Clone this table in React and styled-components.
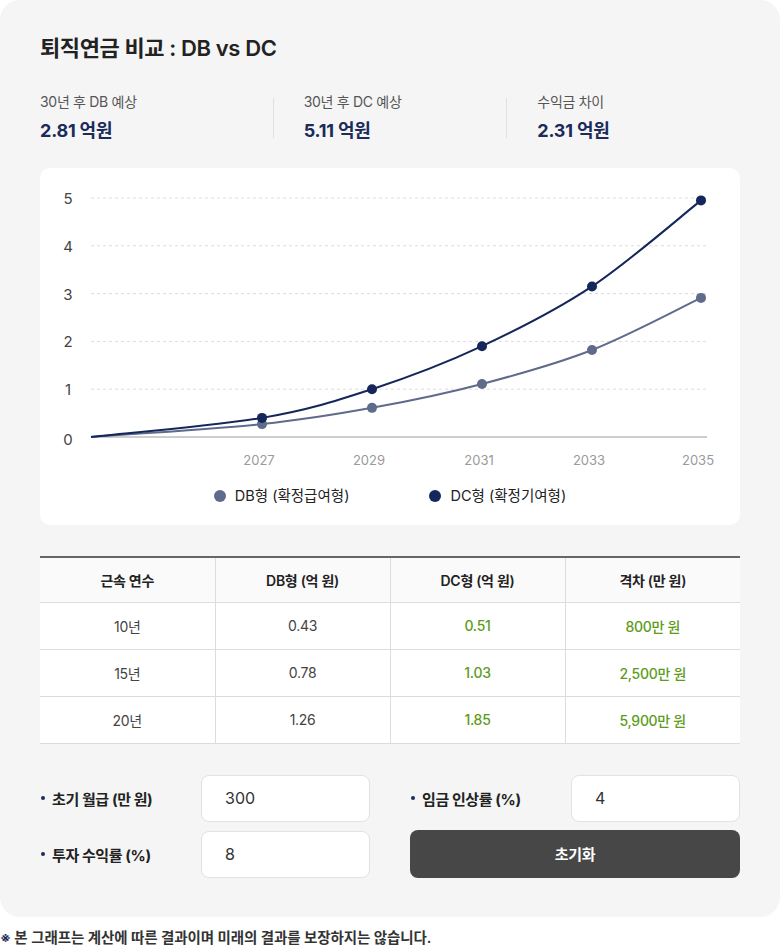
import React from "react";
import styled, { createGlobalStyle } from "styled-components";

const GlobalStyle = createGlobalStyle`
  html, body {
    margin: 0;
    padding: 0;
    background: #fff;
    overflow: hidden;
  }
  body {
    font-family: Inter, "Noto Sans CJK KR", sans-serif;
    color: #222;
  }
  * {
    box-sizing: border-box;
  }
`;

const stats = [
  { label: "30년 후 DB 예상", value: "2.81 억원" },
  { label: "30년 후 DC 예상", value: "5.11 억원" },
  { label: "수익금 차이", value: "2.31 억원" },
];

const rows = [
  { years: "10년", db: "0.43", dc: "0.51", gap: "800만 원" },
  { years: "15년", db: "0.78", dc: "1.03", gap: "2,500만 원" },
  { years: "20년", db: "1.26", dc: "1.85", gap: "5,900만 원" },
];

// chart coordinates (inside the white panel)
const AXIS_Y = 269;
const STEP = 47.8;
const LEFT = 51;
const RIGHT = 667;
const years = [
  { label: "2027", x: 221 },
  { label: "2029", x: 331 },
  { label: "2031", x: 441 },
  { label: "2033", x: 551 },
  { label: "2035", x: 660 },
];
const dcValues = [0.4, 1.0, 1.9, 3.15, 4.95];
const dbValues = [0.27, 0.61, 1.11, 1.82, 2.91];

const toPoints = (values) => [
  [LEFT, AXIS_Y],
  ...values.map((v, i) => [years[i].x + 1, AXIS_Y - v * STEP]),
];

const smoothPath = (pts) => {
  let d = `M${pts[0][0]},${pts[0][1]}`;
  for (let i = 0; i < pts.length - 1; i++) {
    const p0 = pts[i - 1] || pts[i];
    const p1 = pts[i];
    const p2 = pts[i + 1];
    const p3 = pts[i + 2] || p2;
    const c1x = p1[0] + (p2[0] - p0[0]) / 6;
    const c1y = p1[1] + (p2[1] - p0[1]) / 6;
    const c2x = p2[0] - (p3[0] - p1[0]) / 6;
    const c2y = p2[1] - (p3[1] - p1[1]) / 6;
    d += ` C${c1x},${c1y} ${c2x},${c2y} ${p2[0]},${p2[1]}`;
  }
  return d;
};

const DB_COLOR = "#5f6b8b";
const DC_COLOR = "#14265a";

const Chart = () => {
  const db = toPoints(dbValues);
  const dc = toPoints(dcValues);
  return (
    <ChartSvg width="700" height="310" viewBox="0 0 700 310">
      {[1, 2, 3, 4, 5].map((n) => (
        <line
          key={n}
          x1={LEFT}
          x2={RIGHT}
          y1={AXIS_Y - n * STEP}
          y2={AXIS_Y - n * STEP}
          stroke="#dcdcdc"
          strokeDasharray="3 3"
        />
      ))}
      <line x1={LEFT} x2={RIGHT} y1={AXIS_Y} y2={AXIS_Y} stroke="#9a9a9a" />
      {[0, 1, 2, 3, 4, 5].map((n) => (
        <text
          key={n}
          x="28"
          y={AXIS_Y - n * STEP + 2 + (n === 0 ? 2 : 0)}
          textAnchor="middle"
          dominantBaseline="middle"
          fontSize="15"
          fill="#444"
        >
          {n}
        </text>
      ))}
      {years.map((y) => (
        <text
          key={y.label}
          x={y.x - 2}
          y="293"
          textAnchor="middle"
          dominantBaseline="middle"
          fontSize="13"
          fill="#9a9a9a"
        >
          {y.label}
        </text>
      ))}
      <path d={smoothPath(db)} fill="none" stroke={DB_COLOR} strokeWidth="2" />
      <path d={smoothPath(dc)} fill="none" stroke={DC_COLOR} strokeWidth="2" />
      {db.slice(1).map(([x, y], i) => (
        <circle key={`db${i}`} cx={x} cy={y} r="5" fill={DB_COLOR} />
      ))}
      {dc.slice(1).map(([x, y], i) => (
        <circle key={`dc${i}`} cx={x} cy={y} r="5" fill={DC_COLOR} />
      ))}
    </ChartSvg>
  );
};

export default function App() {
  return (
    <>
      <GlobalStyle />
      <Card>
        <Title>퇴직연금 비교 : DB vs DC</Title>
        <Stats>
          {stats.map((s, i) => (
            <React.Fragment key={s.label}>
              {i > 0 && <Divider />}
              <StatItem $first={i === 0}>
                <StatLabel>{s.label}</StatLabel>
                <StatValue>{s.value}</StatValue>
              </StatItem>
            </React.Fragment>
          ))}
        </Stats>

        <ChartPanel>
          <Chart />
          <Legend>
            <LegendItem>
              <LegendDot $color={DB_COLOR} />
              DB형 (확정급여형)
            </LegendItem>
            <LegendItem>
              <LegendDot $color={DC_COLOR} />
              DC형 (확정기여형)
            </LegendItem>
          </Legend>
        </ChartPanel>

        <Table>
          <thead>
            <tr>
              <Th>근속 연수</Th>
              <Th>DB형 (억 원)</Th>
              <Th>DC형 (억 원)</Th>
              <Th>격차 (만 원)</Th>
            </tr>
          </thead>
          <tbody>
            {rows.map((r) => (
              <tr key={r.years}>
                <Td>{r.years}</Td>
                <Td>{r.db}</Td>
                <Td $highlight>{r.dc}</Td>
                <Td $highlight>{r.gap}</Td>
              </tr>
            ))}
          </tbody>
        </Table>

        <Form>
          <Field>
            <FieldLabel>초기 월급 (만 원)</FieldLabel>
            <Input defaultValue="300" />
          </Field>
          <Field>
            <FieldLabel>임금 인상률 (%)</FieldLabel>
            <Input defaultValue="4" />
          </Field>
          <Field>
            <FieldLabel>투자 수익률 (%)</FieldLabel>
            <Input defaultValue="8" />
          </Field>
          <ResetButton type="button">초기화</ResetButton>
        </Form>
      </Card>
      <Notice>
        <NoticeMark>※</NoticeMark> 본 그래프는 계산에 따른 결과이며 미래의 결과를 보장하지는 않습니다.
      </Notice>
    </>
  );
}

const Card = styled.div`
  width: 780px;
  background: #f5f5f5;
  border-radius: 20px;
  padding: 34px 40px 39px;
`;

const Title = styled.h1`
  margin: 0;
  font-size: 22px;
  line-height: 28px;
  font-weight: 600;
  letter-spacing: -0.4px;
  color: #222;
`;

const Stats = styled.div`
  margin-top: 30px;
  display: grid;
  grid-template-columns: 1fr 1px 1fr 1px 1fr;
  align-items: center;
`;

const Divider = styled.div`
  width: 1px;
  height: 40px;
  background: #e0e0e0;
`;

const StatItem = styled.div`
  padding-left: ${(p) => (p.$first ? "0" : "30px")};
  display: flex;
  flex-direction: column;
  gap: 7px;
`;

const StatLabel = styled.div`
  font-size: 14px;
  line-height: 20px;
  color: #555;
  letter-spacing: -0.3px;
`;

const StatValue = styled.div`
  font-size: 18px;
  line-height: 24px;
  font-weight: 700;
  color: #1b2b5a;
  letter-spacing: -0.2px;
`;

const ChartPanel = styled.div`
  margin-top: 25px;
  height: 357px;
  background: #fff;
  border-radius: 10px;
  display: flex;
  flex-direction: column;
`;

const ChartSvg = styled.svg`
  display: block;
  font-family: Inter, "Noto Sans CJK KR", sans-serif;
`;

const Legend = styled.div`
  margin-top: 8px;
  display: flex;
  justify-content: center;
  gap: 80px;
`;

const LegendItem = styled.div`
  display: flex;
  align-items: center;
  gap: 9px;
  font-size: 14.5px;
  line-height: 20px;
  color: #222;
`;

const LegendDot = styled.span`
  width: 12px;
  height: 12px;
  border-radius: 50%;
  background: ${(p) => p.$color};
`;

const Table = styled.table`
  margin-top: 31px;
  width: 100%;
  border-collapse: collapse;
  table-layout: fixed;
  border-top: 2px solid #666;
`;

const Th = styled.th`
  height: 45px;
  background: #fafafa;
  font-size: 14px;
  font-weight: 600;
  color: #222;
  letter-spacing: -0.3px;
  border-bottom: 1px solid #dcdcdc;
  & + & {
    border-left: 1px solid #dcdcdc;
  }
`;

const Td = styled.td`
  height: 47px;
  background: #fff;
  text-align: center;
  font-size: 14px;
  font-weight: ${(p) => (p.$highlight ? 500 : 400)};
  color: ${(p) => (p.$highlight ? "#5c9c1a" : "#444")};
  letter-spacing: -0.3px;
  border-bottom: 1px solid #dcdcdc;
  & + & {
    border-left: 1px solid #dcdcdc;
  }
`;

const Form = styled.div`
  margin-top: 31px;
  display: grid;
  grid-template-columns: 1fr 1fr;
  gap: 9px 40px;
`;

const Field = styled.div`
  display: flex;
  align-items: center;
`;

const FieldLabel = styled.label`
  flex: 1;
  display: flex;
  align-items: center;
  gap: 7px;
  font-size: 15px;
  font-weight: 700;
  color: #222;
  letter-spacing: -0.4px;
  &::before {
    content: "";
    width: 4px;
    height: 4px;
    margin-left: 1px;
    border-radius: 50%;
    background: #1b2b5a;
  }
`;

const Input = styled.input`
  width: 169px;
  height: 47px;
  border: 1px solid #e2e2e2;
  border-radius: 8px;
  background: #fff;
  padding: 0 23px;
  font-family: inherit;
  font-size: 16px;
  color: #333;
  outline: none;
`;

const ResetButton = styled.button`
  height: 48px;
  margin-top: -1px;
  border: none;
  border-radius: 8px;
  background: #474747;
  color: #fff;
  font-family: inherit;
  font-size: 15px;
  font-weight: 600;
  letter-spacing: -0.3px;
  cursor: pointer;
`;

const Notice = styled.p`
  margin: 12px 0 0;
  font-size: 14.5px;
  line-height: 18px;
  font-weight: 600;
  color: #333;
  letter-spacing: -0.1px;
`;

const NoticeMark = styled.span`
  color: #1b2b5a;
`;
